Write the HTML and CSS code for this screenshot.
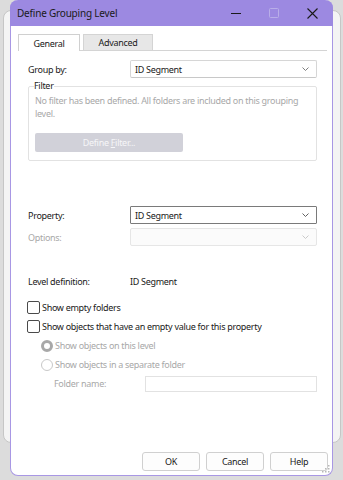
FILE: index.html
```html
<!DOCTYPE html>
<html lang="en">
<head>
    <meta charset="UTF-8">
    <title>Define Grouping Level</title>
    <link rel="stylesheet" href="styles.css">
</head>
<body>
    <div class="back-window"></div>
    <div class="dialog">
        <div class="titlebar">
            <span class="title">Define Grouping Level</span>
            <div class="controls">
                <span class="ctl">
                    <svg width="10" height="10" viewBox="0 0 10 10"><path d="M0 5.5h10" stroke="#1a1a1a" stroke-width="1"/></svg>
                </span>
                <span class="ctl">
                    <svg width="10" height="10" viewBox="0 0 10 10"><rect x="0.5" y="0.5" width="9" height="9" rx="1" fill="none" stroke="#b9aee8" stroke-width="1"/></svg>
                </span>
                <span class="ctl">
                    <svg width="11" height="11" viewBox="0 0 11 11"><path d="M0.5 0.5l10 10M10.5 0.5l-10 10" stroke="#1a1a1a" stroke-width="1.1"/></svg>
                </span>
            </div>
        </div>

        <div class="tabs">
            <span class="tab tab-active">General</span>
            <span class="tab">Advanced</span>
        </div>

        <div class="panel">
            <div class="row">
                <span class="label">Group by:</span>
                <div class="select">
                    <span>ID Segment</span>
                    <svg class="chev" width="7" height="4" viewBox="0 0 7 4"><path d="M0.5 0.5l3 3 3-3" fill="none" stroke="#707070" stroke-width="0.9"/></svg>
                </div>
            </div>

            <fieldset class="filter">
                <legend>Filter</legend>
                <p class="filter-text">No filter has been defined. All folders are included on this grouping level.</p>
                <div class="btn btn-disabled">Define <u>F</u>ilter...</div>
            </fieldset>

            <div class="row row-property">
                <span class="label">Property:</span>
                <div class="select select-focus">
                    <span>ID Segment</span>
                    <svg class="chev" width="7" height="4" viewBox="0 0 7 4"><path d="M0.5 0.5l3 3 3-3" fill="none" stroke="#505050" stroke-width="0.9"/></svg>
                </div>
            </div>
            <div class="row row-options">
                <span class="label muted">Options:</span>
                <div class="select select-disabled">
                    <span></span>
                    <svg class="chev" width="7" height="4" viewBox="0 0 7 4"><path d="M0.5 0.5l3 3 3-3" fill="none" stroke="#c4c4c4" stroke-width="0.9"/></svg>
                </div>
            </div>

            <div class="row row-level">
                <span class="label">Level definition:</span>
                <span class="value">ID Segment</span>
            </div>

            <div class="checks">
                <div class="check">
                    <span class="box"></span>
                    <span>Show empty folders</span>
                </div>
                <div class="check">
                    <span class="box"></span>
                    <span>Show objects that have an empty value for this property</span>
                </div>
                <div class="check sub muted">
                    <span class="radio radio-on"></span>
                    <span>Show objects on this level</span>
                </div>
                <div class="check sub muted">
                    <span class="radio"></span>
                    <span>Show objects in a separate folder</span>
                </div>
                <div class="check folder muted">
                    <span class="folder-label">Folder name:</span>
                    <span class="input"></span>
                </div>
            </div>
        </div>

        <div class="footer">
            <div class="btn">OK</div>
            <div class="btn">Cancel</div>
            <div class="btn">Help</div>
        </div>

        <svg class="grip" width="9" height="9" viewBox="0 0 9 9">
            <g fill="#b8b8b8">
                <rect x="7" y="1" width="1.5" height="1.5"/>
                <rect x="4" y="4" width="1.5" height="1.5"/>
                <rect x="7" y="4" width="1.5" height="1.5"/>
                <rect x="1" y="7" width="1.5" height="1.5"/>
                <rect x="4" y="7" width="1.5" height="1.5"/>
                <rect x="7" y="7" width="1.5" height="1.5"/>
            </g>
        </svg>
    </div>
</body>
</html>
```

FILE: styles.css
```css
body {
    margin: 0;
    width: 343px;
    height: 480px;
    background-color: #dcdcdc;
    font-family: "Noto Sans", sans-serif;
    font-size: 9px;
    letter-spacing: -0.3px;
    color: #1a1a1a;
    position: relative;
    overflow: hidden;
}
.back-window {
    position: absolute;
    left: 3px;
    top: 10px;
    width: 336px;
    height: 431px;
    background-color: #f4f4f4;
    border: 1px solid #c6c6c6;
    border-radius: 8px;
}
.dialog {
    position: relative;
    margin-left: 10px;
    width: 321px;
    height: 475px;
    background-color: #fff;
    border: 1px solid #a897e4;
    border-top: none;
    border-radius: 8px;
    display: flex;
    flex-direction: column;
}
.titlebar {
    height: 26px;
    margin: 0 -1px;
    background-color: #9c89e1;
    border-radius: 8px 8px 0 0;
    display: flex;
    align-items: center;
    padding-left: 7px;
}
.title {
    flex: 1;
    font-size: 10px;
    letter-spacing: -0.2px;
    color: #1a1a1a;
}
.controls {
    display: flex;
    padding-right: 2px;
}
.ctl {
    width: 38px;
    height: 26px;
    display: flex;
    align-items: center;
    justify-content: center;
}
.tabs {
    display: flex;
    align-items: flex-end;
    margin-top: 7px;
    padding-left: 7px;
    gap: 3px;
    height: 17px;
}
.tab {
    height: 15px;
    line-height: 15px;
    text-align: center;
    background-color: #e7e7e7;
    border: 1px solid #d4d4d4;
    border-bottom: none;
    width: 68px;
}
.tab-active {
    height: 16px;
    line-height: 17px;
    width: 60px;
    background-color: #fff;
    border-color: #d0d0d0;
    position: relative;
    top: 1px;
}
.panel {
    flex: 1;
    margin: 0 5px 0 7px;
    border-top: 1px solid #d4d4d4;
    padding: 9px 10px 0 10px;
}
.row {
    display: flex;
    align-items: center;
    height: 18px;
}
.label {
    width: 102px;
    flex-shrink: 0;
}
.muted {
    color: #a8a8a8;
}
.select {
    flex: 1;
    height: 16px;
    border: 1px solid #d6d6d6;
    border-bottom-color: #c8c8c8;
    border-radius: 2px;
    display: flex;
    align-items: center;
    justify-content: space-between;
    padding: 0 7px 0 4px;
}
.select-focus {
    border-color: #7a7a7a;
    border-radius: 1px;
}
.select-disabled {
    border-color: #e6e6e6;
    background-color: #fbfbfb;
}
.filter {
    margin: 1px 0 0 0;
    padding: 0 6px 8px 6px;
    border: 1px solid #e2e2e2;
    border-radius: 2px;
}
.filter legend {
    padding: 0;
    margin-left: -1px;
    line-height: 14px;
}
.filter-text {
    margin: 1px 0 0 0;
    line-height: 13px;
    color: #a8a8a8;
}
.btn {
    width: 56px;
    height: 17px;
    line-height: 17px;
    text-align: center;
    border: 1px solid #d0d0d0;
    border-radius: 3px;
    background-color: #fdfdfd;
}
.btn-disabled {
    width: 148px;
    margin-top: 13px;
    border: none;
    height: 19px;
    line-height: 19px;
    background-color: #d1d1d9;
    color: #f6f6f8;
    border-radius: 2px;
}
.btn-disabled u {
    text-decoration-thickness: 1px;
}
.row-property {
    margin-top: 45px;
}
.row-options {
    margin-top: 4px;
}
.row-level {
    margin-top: 26px;
}
.checks {
    margin-top: 8px;
    margin-left: -1px;
}
.check {
    display: flex;
    align-items: center;
    height: 19px;
    gap: 2px;
}
.sub {
    padding-left: 14px;
}
.box {
    width: 11px;
    height: 11px;
    border: 1px solid #4a4a4a;
    border-radius: 2px;
}
.radio {
    box-sizing: border-box;
    width: 12px;
    height: 12px;
    border: 1px solid #c8c8c8;
    border-radius: 50%;
}
.radio-on {
    border: 3px solid #a8a8a8;
    background-color: #fff;
}
.folder {
    padding-left: 27px;
}
.folder-label {
    width: 89px;
}
.input {
    flex: 1;
    height: 14px;
    border: 1px solid #e2e2e2;
}
.footer {
    display: flex;
    justify-content: flex-end;
    gap: 6px;
    padding: 0 4px 4px 0;
}
.grip {
    position: absolute;
    right: 2px;
    bottom: 2px;
}
```
